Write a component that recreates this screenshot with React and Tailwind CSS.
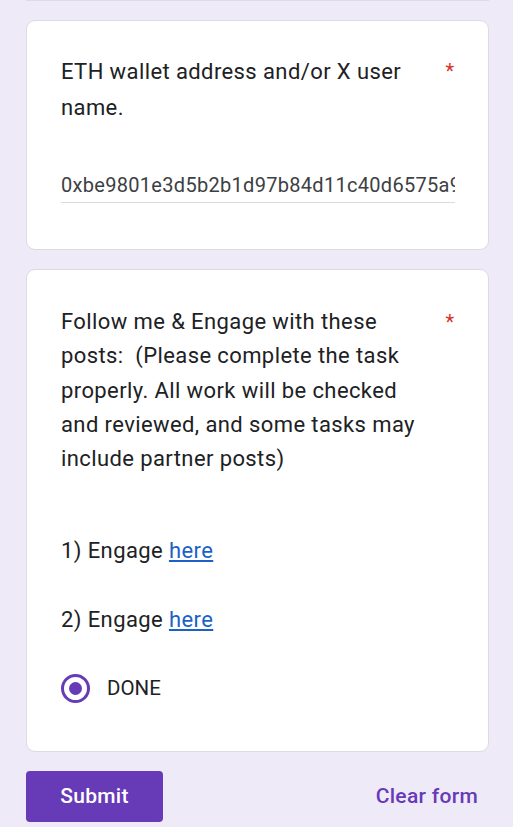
import React, { useState } from 'react';

const Asterisk = () => (
  <span className="ml-auto pl-2 text-[20px] leading-[34px] text-[#d93025]">*</span>
);

const Card = ({ children, className = '' }) => (
  <div className={`bg-white border border-[#dadce0] rounded-[9px] ${className}`}>{children}</div>
);

const Radio = ({ checked }) => (
  <span className="w-[29px] h-[29px] rounded-full border-[3px] border-[#673ab7] flex items-center justify-center shrink-0">
    {checked && <span className="w-[13px] h-[13px] rounded-full bg-[#673ab7]" />}
  </span>
);

export default function App() {
  const [wallet, setWallet] = useState('0xbe9801e3d5b2b1d97b84d11c40d6575a9f3c21e07b');
  const [done, setDone] = useState(true);

  return (
    <div className="min-h-screen bg-[#efeaf7] font-['Roboto',sans-serif] text-[#202124]">
      <div className="w-[463px] ml-[26px] flex flex-col gap-[19px]">
        <div className="h-[1px] bg-white border-b border-x border-[#dadce0] rounded-b-[9px]" />

        <Card className="px-[34px] pt-[33px] pb-[46px]">
          <div className="flex items-start">
            <div className="w-[368px] text-[22px] tracking-[0.4px] leading-[36px]">ETH wallet address and/or X user name.</div>
            <Asterisk />
          </div>
          <div className="mt-[44px] w-[394px] border-b border-[#dadce0]">
            <input
              value={wallet}
              onChange={(e) => setWallet(e.target.value)}
              className="w-full bg-transparent outline-none text-[20px] tracking-[0.3px] leading-[30px] pb-[2px] text-[#3c4043] font-['Roboto',sans-serif]"
            />
          </div>
        </Card>

        <Card className="px-[34px] pt-[35px] pb-[46px]">
          <div className="flex items-start">
            <div className="w-[368px] text-[22px] tracking-[0.4px] leading-[34.3px]">
              Follow me &amp; Engage with these posts:&nbsp; (Please complete the task properly. All work will be checked and reviewed, and some tasks may include partner posts)
            </div>
            <Asterisk />
          </div>
          <div className="mt-[58px] text-[22px] tracking-[0.4px] leading-[34px]">
            1) Engage <a href="#" className="text-[#1a62c7] underline underline-offset-2">here</a>
          </div>
          <div className="mt-[35px] text-[22px] tracking-[0.4px] leading-[34px]">
            2) Engage <a href="#" className="text-[#1a62c7] underline underline-offset-2">here</a>
          </div>
          <label className="mt-[34px] flex items-center gap-[17px] cursor-pointer" onClick={() => setDone(true)}>
            <Radio checked={done} />
            <span className="text-[20.5px] leading-[34px]">DONE</span>
          </label>
        </Card>

        <div className="flex items-center justify-between pb-[6px]">
          <button className="w-[137px] h-[51px] rounded-[4px] bg-[#673ab7] text-white text-[21px] font-medium tracking-[0.3px]">
            Submit
          </button>
          <button className="mr-[11px] text-[#673ab7] text-[21px] font-medium tracking-[0.3px]">Clear form</button>
        </div>
      </div>
    </div>
  );
}
